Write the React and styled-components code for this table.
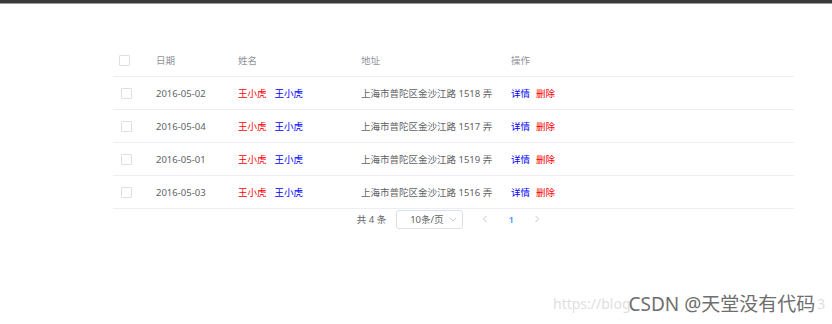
import React from "react";
import styled, { createGlobalStyle } from "styled-components";

const GlobalStyle = createGlobalStyle`
  html, body {
    margin: 0;
    padding: 0;
    background: #ffffff;
  }
  body {
    font-family: "Noto Sans", "Noto Sans CJK SC", sans-serif;
  }
`;

const Page = styled.div`
  position: relative;
  width: 832px;
  height: 324px;
  overflow: hidden;
  background: #ffffff;
`;

const TopBar = styled.div`
  height: 3px;
  background: #3a3a3a;
  border-bottom: 1px solid #9a9a9a;
`;

const Wrapper = styled.div`
  padding: 40px 38px 0 113px;
`;

const Table = styled.div`
  width: 681px;
  font-size: 9.5px;
  color: #606266;
`;

const Row = styled.div`
  display: grid;
  grid-template-columns: 33px 82px 123px 150px 1fr;
  height: 32px;
  align-items: center;
  border-bottom: 1px solid #ebeef5;
  color: ${(p) => (p.$head ? "#909399" : "#606266")};
`;

const Cell = styled.div`
  padding-left: 10px;
  white-space: nowrap;
  display: flex;
  align-items: center;
  gap: ${(p) => p.$gap || 0}px;
`;

const CheckCell = styled.div`
  padding-left: ${(p) => p.$offset}px;
  display: flex;
  align-items: center;
`;

const Checkbox = styled.span`
  display: inline-block;
  width: 9px;
  height: 9px;
  border: 1px solid #dcdfe6;
  border-radius: 1px;
  background: #fff;
`;

const Tag = styled.span`
  color: ${(p) => p.$color};
`;

const Pager = styled.div`
  width: 681px;
  display: flex;
  justify-content: center;
  align-items: center;
  height: 20px;
  font-size: 9.5px;
  color: #606266;
  padding-left: 0;
`;

const Total = styled.span`
  margin-right: 10px;
`;

const Select = styled.div`
  box-sizing: border-box;
  width: 67px;
  height: 19px;
  border: 1px solid #dcdfe6;
  border-radius: 3px;
  display: flex;
  align-items: center;
  justify-content: space-between;
  padding: 0 5px 0 13px;
  margin-right: 9px;
`;

const PageBtn = styled.span`
  width: 26px;
  color: ${(p) => (p.$active ? "#409eff" : "#c0c4cc")};
  font-weight: ${(p) => (p.$active ? 600 : 400)};
  display: flex;
  justify-content: center;
`;

const Watermark = styled.div`
  position: absolute;
  left: 553px;
  top: 289px;
  display: flex;
  align-items: center;
  white-space: nowrap;
  font-family: "Noto Sans", "Noto Sans CJK SC", sans-serif;
`;

const Url = styled.span`
  color: #e0e0e0;
  font-size: 14px;
`;

const Brand = styled.span`
  color: #6e6e6e;
  font-size: 19px;
  margin: 0 2px 0 -2px;
`;

const Chevron = ({ dir }) => (
  <svg width="6" height="8" viewBox="0 0 6 8">
    <path
      d={dir === "left" ? "M4.5 0.8 L1.5 4 L4.5 7.2" : "M1.5 0.8 L4.5 4 L1.5 7.2"}
      fill="none"
      stroke="#c0c4cc"
      strokeWidth="1"
    />
  </svg>
);

const Down = () => (
  <svg width="8" height="5" viewBox="0 0 8 5">
    <path d="M0.8 0.8 L4 4 L7.2 0.8" fill="none" stroke="#c0c4cc" strokeWidth="0.9" />
  </svg>
);

const rows = [
  { date: "2016-05-02", addr: "上海市普陀区金沙江路 1518 弄" },
  { date: "2016-05-04", addr: "上海市普陀区金沙江路 1517 弄" },
  { date: "2016-05-01", addr: "上海市普陀区金沙江路 1519 弄" },
  { date: "2016-05-03", addr: "上海市普陀区金沙江路 1516 弄" },
];

export default function App() {
  return (
    <Page>
      <GlobalStyle />
      <TopBar />
      <Wrapper>
        <Table>
          <Row $head>
            <CheckCell $offset={6}>
              <Checkbox />
            </CheckCell>
            <Cell>日期</Cell>
            <Cell>姓名</Cell>
            <Cell>地址</Cell>
            <Cell>操作</Cell>
          </Row>
          {rows.map((r) => (
            <Row key={r.date}>
              <CheckCell $offset={8}>
                <Checkbox />
              </CheckCell>
              <Cell>{r.date}</Cell>
              <Cell $gap={8}>
                <Tag $color="#ff0000">王小虎</Tag>
                <Tag $color="#0000ff">王小虎</Tag>
              </Cell>
              <Cell>{r.addr}</Cell>
              <Cell $gap={6}>
                <Tag $color="#0000ff">详情</Tag>
                <Tag $color="#ff0000">删除</Tag>
              </Cell>
            </Row>
          ))}
        </Table>
        <Pager>
          <Total>共 4 条</Total>
          <Select>
            <span>10条/页</span>
            <Down />
          </Select>
          <PageBtn>
            <Chevron dir="left" />
          </PageBtn>
          <PageBtn $active>1</PageBtn>
          <PageBtn>
            <Chevron dir="right" />
          </PageBtn>
        </Pager>
      </Wrapper>
      <Watermark>
        <Url>https://blog</Url>
        <Brand>CSDN @天堂没有代码</Brand>
        <Url>3</Url>
      </Watermark>
    </Page>
  );
}
